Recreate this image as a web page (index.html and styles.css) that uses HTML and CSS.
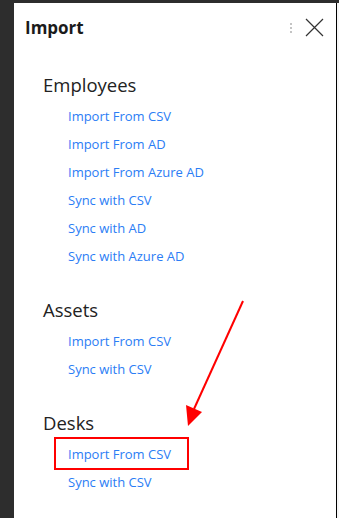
FILE: index.html
```html
<!DOCTYPE html>
<html lang="en">
<head>
    <meta charset="UTF-8">
    <meta name="viewport" content="width=device-width, initial-scale=1.0">
    <title>Import</title>
    <link rel="stylesheet" href="styles.css">
</head>
<body>
    <div class="screen">
        <div class="side-strip"></div>
        <div class="import-panel">
            <div class="panel-header">
                <h2 class="panel-title">Import</h2>
                <div class="header-actions">
                    <span class="kebab"><i></i><i></i><i></i></span>
                    <button class="close-btn" aria-label="Close">
                        <svg width="19" height="19" viewBox="0 0 19 19">
                            <path d="M1 1 L18 18 M18 1 L1 18" stroke="#333" stroke-width="1.2" fill="none"/>
                        </svg>
                    </button>
                </div>
            </div>

            <div class="import-group">
                <h3 class="group-title">Employees</h3>
                <a class="import-link" href="#">Import From CSV</a>
                <a class="import-link" href="#">Import From AD</a>
                <a class="import-link" href="#">Import From Azure AD</a>
                <a class="import-link" href="#">Sync with CSV</a>
                <a class="import-link" href="#">Sync with AD</a>
                <a class="import-link" href="#">Sync with Azure AD</a>
            </div>

            <div class="import-group">
                <h3 class="group-title">Assets</h3>
                <a class="import-link" href="#">Import From CSV</a>
                <a class="import-link" href="#">Sync with CSV</a>
            </div>

            <div class="import-group">
                <h3 class="group-title">Desks</h3>
                <a class="import-link highlighted" href="#">Import From CSV</a>
                <a class="import-link" href="#">Sync with CSV</a>
            </div>

            <!-- annotation arrow -->
            <svg class="pointer-arrow" width="70" height="130" viewBox="0 0 70 130">
                <line x1="63" y1="2" x2="14" y2="110" stroke="#f00" stroke-width="2"/>
                <polygon points="8,127 6,106 22,113" fill="#f00"/>
            </svg>
        </div>
        <div class="edge-strip"></div>
    </div>
</body>
</html>
```

FILE: styles.css
```css
body {
    margin: 0;
    background: #2d2d2d;
    font-family: 'Open Sans', 'Noto Sans', sans-serif;
    color: #222;
}

.screen {
    display: flex;
    height: 515px;
    margin-top: 3px;
    overflow: hidden;
}

.side-strip {
    width: 14px;
    flex: none;
}

.import-panel {
    position: relative;
    width: 322px;
    flex: none;
    background: #fff;
    border-right: 1px solid #000;
}

.edge-strip {
    flex: 1;
    background: #f6f6f6;
}

.panel-header {
    display: flex;
    align-items: center;
    justify-content: space-between;
    height: 49px;
    padding: 0 12px 0 11px;
}

.panel-title {
    margin: 0;
    font-size: 17px;
    font-weight: 700;
    color: #1b1b1b;
}

.header-actions {
    display: flex;
    align-items: center;
    gap: 13px;
}

.kebab {
    display: flex;
    flex-direction: column;
    gap: 2px;
}

.kebab i {
    width: 2px;
    height: 2px;
    background: #c4c4c4;
}

.close-btn {
    border: none;
    background: none;
    padding: 0;
    display: flex;
    cursor: pointer;
}

.import-group {
    display: flex;
    flex-direction: column;
    align-items: flex-start;
    padding-left: 29px;
    margin-top: 18px;
}

.import-group + .import-group {
    margin-top: 25px;
}

.group-title {
    margin: 0 0 2px;
    font-size: 18.5px;
    font-weight: 400;
    line-height: 30px;
    color: #222;
}

.import-link {
    padding-left: 25px;
    font-size: 13px;
    line-height: 28px;
    color: #2b7df5;
    text-decoration: none;
}

.highlighted {
    position: relative;
}

.highlighted::after {
    content: '';
    position: absolute;
    left: 11px;
    right: -18px;
    top: -3px;
    bottom: -2px;
    border: 2px solid #f00;
}

.pointer-arrow {
    position: absolute;
    left: 166px;
    top: 296px;
}
```
